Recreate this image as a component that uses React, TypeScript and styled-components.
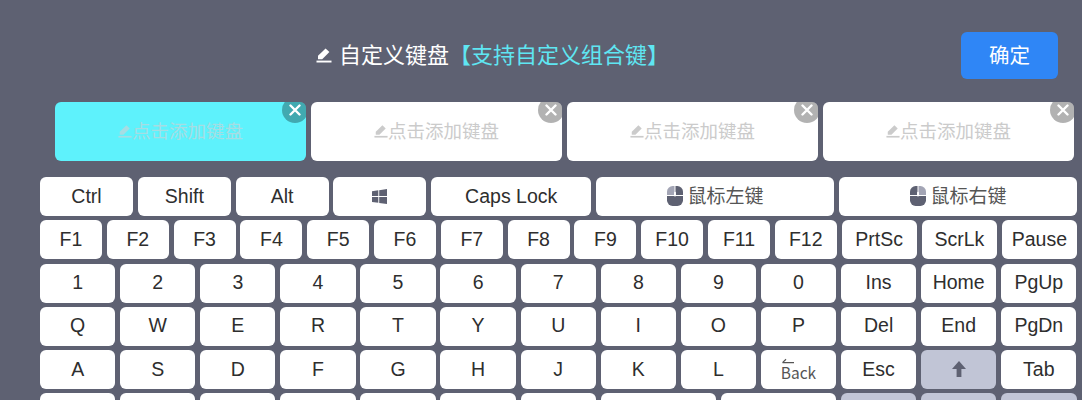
import React from 'react'
import styled, { createGlobalStyle } from 'styled-components'

const GlobalStyle = createGlobalStyle`
	html, body {
		margin: 0;
		padding: 0;
		background: #5e6172;
	}
`

const Page = styled.div`
	width: 1082px;
	height: 400px;
	overflow: hidden;
	background: #5e6172;
	font-family: 'Liberation Sans', 'Noto Sans CJK SC', sans-serif;
`

const Header = styled.header`
	display: flex;
	align-items: center;
	padding: 32px 24px 0 316px;
`

const Title = styled.h1`
	display: flex;
	align-items: center;
	margin: 0;
	padding-bottom: 5px;
	font-size: 22px;
	font-weight: 400;
	color: #fff;
	font-family: 'Noto Sans CJK SC', sans-serif;
	svg {
		margin-right: 7px;
		margin-top: 3px;
	}
`

const Hint = styled.span`
	color: #5fe6f2;
`

const Confirm = styled.button`
	margin-left: auto;
	width: 97px;
	height: 47px;
	padding: 0 0 4px;
	border: 0;
	border-radius: 6px;
	background: #2f86f6;
	color: #fff;
	font-size: 20.5px;
	font-family: 'Noto Sans CJK SC', sans-serif;
`

const Slots = styled.div`
	display: grid;
	grid-template-columns: repeat(4, 251px);
	gap: 5px;
	margin-top: 23px;
	padding-left: 55px;
`

const Slot = styled.div<{ $active?: boolean }>`
	position: relative;
	overflow: hidden;
	display: flex;
	align-items: center;
	justify-content: center;
	height: 59px;
	padding-bottom: 4px;
	box-sizing: border-box;
	border-radius: 6px;
	background: ${(p) => (p.$active ? '#5ef2fc' : '#fff')};
	color: ${(p) => (p.$active ? '#a6dde3' : '#cbcbcb')};
	font-size: 18.5px;
	font-family: 'Noto Sans CJK SC', sans-serif;
	svg {
		margin-top: 3px;
	}
`

const Remove = styled.span`
	position: absolute;
	top: -5px;
	right: -2px;
	display: flex;
	align-items: center;
	justify-content: center;
	width: 26px;
	height: 26px;
	border-radius: 50%;
	background: rgba(0, 0, 0, 0.3);
	svg {
		margin-top: 0;
	}
`

const Board = styled.div`
	display: flex;
	flex-direction: column;
	gap: 4.3px;
	margin-top: 16px;
	padding-left: 40px;
`

const Row = styled.div<{ $columns: string }>`
	display: grid;
	grid-template-columns: ${(p) => p.$columns};
	grid-auto-rows: 39px;
	column-gap: 4.8px;
`

const Key = styled.div<{ $muted?: boolean }>`
	display: flex;
	align-items: center;
	justify-content: center;
	gap: 5px;
	padding-bottom: 1px;
	box-sizing: border-box;
	border-radius: 6px;
	background: ${(p) => (p.$muted ? '#c1c5d6' : '#fff')};
	color: #2e2e2e;
	font-size: 19.5px;
	white-space: nowrap;
`

const CnLabel = styled.span`
	color: #555;
	font-size: 19px;
	margin-top: -3px;
	font-family: 'Noto Sans CJK SC', sans-serif;
`

const BackKey = styled.span`
	display: flex;
	flex-direction: column;
	align-items: flex-start;
	color: #555;
	font-size: 15.5px;
	line-height: 17px;
	font-family: 'Noto Sans CJK SC', sans-serif;
	margin-top: 1px;
	svg {
		display: block;
	}
`

const Pencil = ({ size, color }: { size: number; color: string }) => (
	<svg width={size} height={size} viewBox="0 0 16 16" fill={color}>
		<path d="M2 12.2V8.8L9.6 1.4l3.8 3.6-7.2 7.2z" />
		<rect x="0.5" y="13.6" width="15" height="1.9" />
	</svg>
)

const Cross = () => (
	<svg width="12" height="12" viewBox="0 0 12 12" stroke="#fff" strokeWidth="2.4" strokeLinecap="round">
		<path d="M1.5 1.5l9 9M10.5 1.5l-9 9" />
	</svg>
)

const WindowsLogo = () => (
	<svg width="15" height="15" viewBox="0 0 15 15" fill="#5e6172">
		<path d="M0 2.2 6.3 1.3v5.8H0zM7.2 1.2 15 0v7.1H7.2zM0 8h6.3v5.8L0 12.9zM7.2 8H15v7l-7.8-1.1z" />
	</svg>
)

const MouseIcon = ({ side }: { side: 'left' | 'right' }) => (
	<svg width="16" height="20" viewBox="0 0 17 21">
		<path d="M0 9.5V6a6 6 0 0 1 6-6h2v9.5z" fill={side === 'left' ? '#a3a5b5' : '#5e6172'} />
		<path d="M9 9.5V0h2a6 6 0 0 1 6 6v3.5z" fill={side === 'right' ? '#a3a5b5' : '#5e6172'} />
		<path d="M0 10.5h17V15a6 6 0 0 1-6 6H6a6 6 0 0 1-6-6z" fill="#5e6172" />
		<rect x="7.5" y="6" width="2" height="5" rx="1" fill="#fff" />
	</svg>
)

const UpArrow = () => (
	<svg width="14" height="16" viewBox="0 0 14 16" fill="#5e6172">
		<path d="M7 0l7 8H9.4v8H4.6V8H0z" />
	</svg>
)

const BackArrow = () => (
	<svg width="14" height="6" viewBox="0 0 14 6" fill="none" stroke="#555" strokeWidth="1.2">
		<path d="M13 4.6H1.5M1.5 4.6 5 1.2" />
	</svg>
)

const functionKeys = ['F1', 'F2', 'F3', 'F4', 'F5', 'F6', 'F7', 'F8', 'F9', 'F10', 'F11', 'F12', 'PrtSc', 'ScrLk', 'Pause']
const numberKeys = ['1', '2', '3', '4', '5', '6', '7', '8', '9', '0', 'Ins', 'Home', 'PgUp']
const letterKeys = ['Q', 'W', 'E', 'R', 'T', 'Y', 'U', 'I', 'O', 'P', 'Del', 'End', 'PgDn']
const homeKeys = ['A', 'S', 'D', 'F', 'G', 'H', 'J', 'K', 'L']

const fullRow = 'repeat(13, 75.3px)'

export default function App() {
	return (
		<Page>
			<GlobalStyle />
			<Header>
				<Title>
					<Pencil size={16} color="#fff" />
					自定义键盘
					<Hint>【支持自定义组合键】</Hint>
				</Title>
				<Confirm>确定</Confirm>
			</Header>
			<Slots>
				{[true, false, false, false].map((active, i) => (
					<Slot key={i} $active={active}>
						<Pencil size={14} color={active ? '#a6dde3' : '#cbcbcb'} />
						点击添加键盘
						<Remove>
							<Cross />
						</Remove>
					</Slot>
				))}
			</Slots>
			<Board>
				<Row $columns="repeat(4, 93px) 160px 238.2px 238.2px">
					<Key>Ctrl</Key>
					<Key>Shift</Key>
					<Key>Alt</Key>
					<Key>
						<WindowsLogo />
					</Key>
					<Key>Caps Lock</Key>
					<Key>
						<MouseIcon side="left" />
						<CnLabel>鼠标左键</CnLabel>
					</Key>
					<Key>
						<MouseIcon side="right" />
						<CnLabel>鼠标右键</CnLabel>
					</Key>
				</Row>
				<Row $columns="repeat(12, 62px) repeat(3, 75.3px)">
					{functionKeys.map((k) => (
						<Key key={k}>{k}</Key>
					))}
				</Row>
				<Row $columns={fullRow}>
					{numberKeys.map((k) => (
						<Key key={k}>{k}</Key>
					))}
				</Row>
				<Row $columns={fullRow}>
					{letterKeys.map((k) => (
						<Key key={k}>{k}</Key>
					))}
				</Row>
				<Row $columns={fullRow}>
					{homeKeys.map((k) => (
						<Key key={k}>{k}</Key>
					))}
					<Key>
						<BackKey>
							<BackArrow />
							Back
						</BackKey>
					</Key>
					<Key>Esc</Key>
					<Key $muted>
						<UpArrow />
					</Key>
					<Key>Tab</Key>
				</Row>
				{/* only the top edge of this row is on screen, its labels fall below the fold */}
				<Row $columns="repeat(7, 75.3px) repeat(2, 115.4px) repeat(3, 75.3px)">
					<Key />
					<Key />
					<Key />
					<Key />
					<Key />
					<Key />
					<Key />
					<Key />
					<Key />
					<Key $muted />
					<Key $muted />
					<Key $muted />
				</Row>
			</Board>
		</Page>
	)
}
